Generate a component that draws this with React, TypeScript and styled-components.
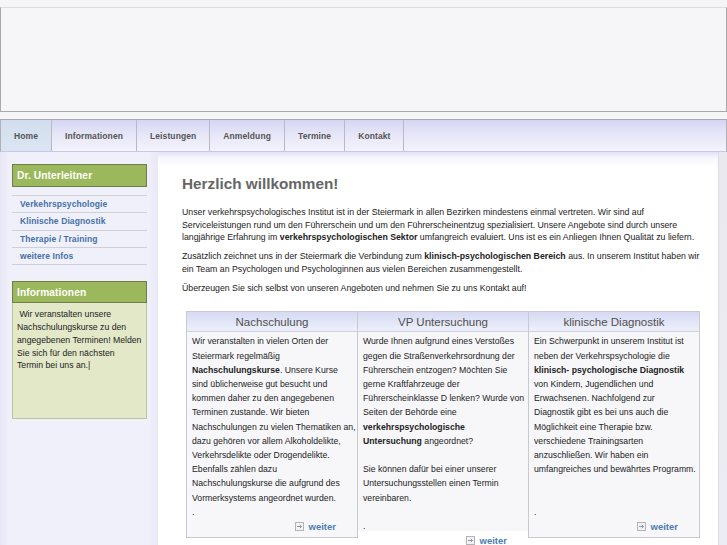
import React from "react";
import styled, { createGlobalStyle } from "styled-components";

const Global = createGlobalStyle`
  html, body { margin: 0; padding: 0; background: #f5f4f6; }
  body { font-family: "Liberation Sans", Arial, sans-serif; color: #222; }
  * { box-sizing: border-box; }
`;

const Page = styled.div`
  width: 727px;
  padding-top: 7px;
  height: 545px;
  overflow: hidden;
`;

const Header = styled.div`
  height: 105px;
  background: #f6f5f7;
  border: 1px solid #a9a9a9;
  border-top-color: #dcdcdc;
`;

const Nav = styled.nav`
  margin-top: 7px;
  height: 33px;
  display: flex;
  border-top: 1px solid #a8a8b4;
  border-left: 1px solid #b0b0b8;
  border-right: 1px solid #b0b0b8;
  border-bottom: 1px solid #c6c6ee;
  background: linear-gradient(to bottom, #d5d5f3 0%, #e6e6f8 45%, #f3f3fc 100%);
`;

const Tab = styled.div<{ $active?: boolean }>`
  display: flex;
  align-items: center;
  padding: 0 13px;
  border-right: 1px solid #b9b9c6;
  font-size: 8.5px;
  font-weight: bold;
  color: #555;
  letter-spacing: 0.1px;
  background: ${(p) => (p.$active ? "linear-gradient(to bottom, #d2deef, #dbe5f2)" : "transparent")};
`;

const Main = styled.div`
  display: flex;
  height: 393px;
`;

const Sidebar = styled.aside`
  width: 158px;
  flex: none;
  padding: 12px 11px 0 12px;
  background: linear-gradient(to right, #e6e6f6 0px, #eff0fa 9px, #eff0fa 148px, #e8e8f6 158px);
`;

const GreenHead = styled.div<{ $h: number }>`
  height: ${(p) => p.$h}px;
  display: flex;
  align-items: center;
  padding-left: 4px;
  background: #9cb85c;
  border: 1px solid #6e7d4b;
  color: #fff;
  font-weight: bold;
  font-size: 10.2px;
  letter-spacing: 0.1px;
`;

const Menu = styled.ul`
  list-style: none;
  margin: 8px 0 0 0;
  padding: 0;
  border-top: 1px solid #cfcfd6;
`;

const MenuItem = styled.li`
  height: 17.3px;
  display: flex;
  align-items: center;
  padding-left: 8px;
  border-bottom: 1px solid #cfcfd6;
  font-size: 8.5px;
  font-weight: bold;
  color: #4671a6;
  letter-spacing: 0.1px;
`;

const InfoBlock = styled.div`
  margin-top: 16px;
`;

const InfoBody = styled.div`
  height: 116px;
  background: #e2e8c8;
  border: 1px solid #bac79c;
  border-top: none;
  padding: 5px 4px;
  font-size: 8.7px;
  line-height: 12.8px;
  color: #222;
  white-space: nowrap;
`;

const Content = styled.main`
  flex: 1;
  padding: 23px 18px 0 24px;
  background: linear-gradient(to bottom, #e2e2f5 0px, #f6f6fc 6px, #ffffff 14px);
`;

const Title = styled.h1`
  margin: 0;
  font-size: 15.3px;
  line-height: 17px;
  font-weight: bold;
  color: #666;
`;

const Para = styled.p<{ $mt: number }>`
  margin: ${(p) => p.$mt}px 0 0 0;
  font-size: 8.75px;
  line-height: 12.65px;
  color: #222;
  white-space: nowrap;
`;

const Boxes = styled.div`
  margin: 17px 0 0 4px;
  display: grid;
  grid-template-columns: 172px 171px 171px;
  align-items: start;
`;

const Box = styled.div<{ $h: number; $first?: boolean; $open?: boolean }>`
  height: ${(p) => p.$h}px;
  margin-left: ${(p) => (p.$first ? 0 : -1)}px;
  background: #f7f7fa;
  border: 1px solid #c9c9d2;
  border-bottom: ${(p) => (p.$open ? "none" : "1px solid #c9c9d2")};
  overflow: visible;
`;

const BoxHead = styled.div`
  height: 20px;
  display: flex;
  align-items: center;
  justify-content: center;
  background: linear-gradient(to bottom, #d6daf3, #eef0fa);
  border-bottom: 1px solid #cdd0e2;
  font-size: 11.5px;
  color: #505050;
`;

const BoxBody = styled.div`
  padding: 2px 4px 0 5px;
  font-size: 8.7px;
  line-height: 14.2px;
  color: #222;
  white-space: nowrap;
`;

const More = styled.div`
  display: flex;
  justify-content: flex-end;
  align-items: center;
  gap: 5px;
  padding-right: 21px;
  height: 14.2px;
  font-size: 9.5px;
  font-weight: bold;
  color: #4a7db4;
`;

const RightStrip = styled.div`
  width: 9px;
  flex: none;
  background: linear-gradient(to bottom, #e9e9ee 0px, #ececf4 100%);
  border-left: 1px solid #dcdce2;
`;

const ArrowIcon = () => (
  <svg width="9" height="9" viewBox="0 0 9 9">
    <rect x="0.5" y="0.5" width="8" height="8" fill="#f3f3f3" stroke="#b4b4b4" />
    <path d="M2 4.5H6.5M4.8 2.8L6.5 4.5L4.8 6.2" fill="none" stroke="#7f8fa8" strokeWidth="0.9" />
  </svg>
);

const Weiter = () => (
  <More>
    <ArrowIcon />
    <span>weiter</span>
  </More>
);

const Lines = ({ lines }: { lines: React.ReactNode[] }) => (
  <>
    {lines.map((l, i) => (
      <div key={i}>{l === "" ? "\u00a0" : l}</div>
    ))}
  </>
);

export default function App() {
  return (
    <Page>
      <Global />
      <Header />
      <Nav>
        <Tab $active>Home</Tab>
        <Tab>Informationen</Tab>
        <Tab>Leistungen</Tab>
        <Tab>Anmeldung</Tab>
        <Tab>Termine</Tab>
        <Tab>Kontakt</Tab>
      </Nav>
      <Main>
        <Sidebar>
          <GreenHead $h={23}>Dr. Unterleitner</GreenHead>
          <Menu>
            <MenuItem>Verkehrspsychologie</MenuItem>
            <MenuItem>Klinische Diagnostik</MenuItem>
            <MenuItem>Therapie / Training</MenuItem>
            <MenuItem>weitere Infos</MenuItem>
          </Menu>
          <InfoBlock>
            <GreenHead $h={22}>Informationen</GreenHead>
            <InfoBody>
              <Lines
                lines={[
                  "\u00a0Wir veranstalten unsere",
                  "Nachschulungskurse zu den",
                  "angegebenen Terminen! Melden",
                  "Sie sich für den nächsten",
                  "Termin bei uns an.|",
                ]}
              />
            </InfoBody>
          </InfoBlock>
        </Sidebar>
        <Content>
          <Title>Herzlich willkommen!</Title>
          <Para $mt={14}>
            Unser verkehrspsychologisches Institut ist in der Steiermark in allen Bezirken mindestens einmal vertreten. Wir sind auf
            <br />
            Serviceleistungen rund um den Führerschein und um den Führerscheinentzug spezialisiert. Unsere Angebote sind durch unsere
            <br />
            langjährige Erfahrung im <b>verkehrspsychologischen Sektor</b> umfangreich evaluiert. Uns ist es ein Anliegen Ihnen Qualität zu liefern.
          </Para>
          <Para $mt={6}>
            Zusätzlich zeichnet uns in der Steiermark die Verbindung zum <b>klinisch-psychologischen Bereich</b> aus. In unserem Institut haben wir
            <br />
            ein Team an Psychologen und Psychologinnen aus vielen Bereichen zusammengestellt.
          </Para>
          <Para $mt={6.5}>Überzeugen Sie sich selbst von unseren Angeboten und nehmen Sie zu uns Kontakt auf!</Para>
          <Boxes>
            <Box $h={227} $first>
              <BoxHead>Nachschulung</BoxHead>
              <BoxBody>
                <Lines
                  lines={[
                    "Wir veranstalten in vielen Orten der",
                    "Steiermark regelmäßig",
                    <>
                      <b>Nachschulungskurse</b>. Unsere Kurse
                    </>,
                    "sind üblicherweise gut besucht und",
                    "kommen daher zu den angegebenen",
                    "Terminen zustande. Wir bieten",
                    "Nachschulungen zu vielen Thematiken an,",
                    "dazu gehören vor allem Alkoholdelikte,",
                    "Verkehrsdelikte oder Drogendelikte.",
                    "Ebenfalls zählen dazu",
                    "Nachschulungskurse die aufgrund des",
                    "Vormerksystems angeordnet wurden.",
                    ".",
                  ]}
                />
              </BoxBody>
              <Weiter />
            </Box>
            <Box $h={220} $open>
              <BoxHead>VP Untersuchung</BoxHead>
              <BoxBody>
                <Lines
                  lines={[
                    "Wurde Ihnen aufgrund eines Verstoßes",
                    "gegen die Straßenverkehrsordnung der",
                    "Führerschein entzogen? Möchten Sie",
                    "gerne Kraftfahrzeuge der",
                    "Führerscheinklasse D lenken? Wurde von",
                    "Seiten der Behörde eine",
                    <b>verkehrspsychologische</b>,
                    <>
                      <b>Untersuchung</b> angeordnet?
                    </>,
                    "",
                    "Sie können dafür bei einer unserer",
                    "Untersuchungsstellen einen Termin",
                    "vereinbaren.",
                    "",
                    ".",
                  ]}
                />
              </BoxBody>
              <Weiter />
            </Box>
            <Box $h={227}>
              <BoxHead>klinische Diagnostik</BoxHead>
              <BoxBody>
                <Lines
                  lines={[
                    "Ein Schwerpunkt in unserem Institut ist",
                    "neben der Verkehrspsychologie die",
                    <b>klinisch- psychologische Diagnostik</b>,
                    "von Kindern, Jugendlichen und",
                    "Erwachsenen. Nachfolgend zur",
                    "Diagnostik gibt es bei uns auch die",
                    "Möglichkeit eine Therapie bzw.",
                    "verschiedene Trainingsarten",
                    "anzuschließen. Wir haben ein",
                    "umfangreiches und bewährtes Programm.",
                    "",
                    "",
                    ".",
                  ]}
                />
              </BoxBody>
              <Weiter />
            </Box>
          </Boxes>
        </Content>
        <RightStrip />
      </Main>
    </Page>
  );
}
